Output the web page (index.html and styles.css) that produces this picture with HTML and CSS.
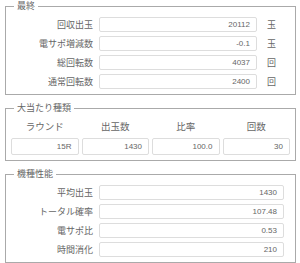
FILE: index.html
```html
<!DOCTYPE html>
<html lang="ja">
<head>
<meta charset="utf-8">
<link rel="stylesheet" href="styles.css">
</head>
<body>
<fieldset class="box">
  <legend>最終</legend>
  <div class="form3">
    <label>回収出玉</label><div class="inp">20112</div><span class="unit">玉</span>
    <label>電サポ増減数</label><div class="inp">-0.1</div><span class="unit">玉</span>
    <label>総回転数</label><div class="inp">4037</div><span class="unit">回</span>
    <label>通常回転数</label><div class="inp">2400</div><span class="unit">回</span>
  </div>
</fieldset>
<fieldset class="box">
  <legend>大当たり種類</legend>
  <div class="cols">
    <span class="head">ラウンド</span><span class="head">出玉数</span><span class="head">比率</span><span class="head">回数</span>
    <div class="inp">15R</div><div class="inp">1430</div><div class="inp">100.0</div><div class="inp">30</div>
  </div>
</fieldset>
<fieldset class="box">
  <legend>機種性能</legend>
  <div class="form2">
    <label>平均出玉</label><div class="inp">1430</div>
    <label>トータル確率</label><div class="inp">107.48</div>
    <label>電サポ比</label><div class="inp">0.53</div>
    <label>時間消化</label><div class="inp">210</div>
  </div>
</fieldset>
<div class="btnrow"><div class="btn"></div></div>
</body>
</html>
```
FILE: styles.css
```css
html, body {
  margin: 0;
  padding: 0;
  background: #fff;
}
body {
  padding: 0 4px 0 5px;
  font-family: "Noto Sans CJK JP", "Noto Sans", sans-serif;
  font-size: 9px;
  color: #666;
}
.box {
  margin: 0 0 7px 0;
  border: 1px solid #aaa;
  padding: 5px 5px 5px 5px;
  min-width: 0;
}
.box legend {
  padding: 0 3px;
  margin-left: 3px;
  line-height: 12px;
}
.form3 {
  display: grid;
  grid-template-columns: 82px 158px 1fr;
  column-gap: 6px;
  row-gap: 4px;
  align-items: center;
}
.form2 {
  display: grid;
  grid-template-columns: 82px 1fr;
  column-gap: 6px;
  row-gap: 4px;
  align-items: center;
  padding-right: 6px;
}
label {
  text-align: right;
}
.unit {
  padding-left: 4px;
}
.inp {
  height: 13px;
  border: 1px solid #ddd;
  border-radius: 2px;
  text-align: right;
  padding: 0 6px;
  line-height: 13px;
  font-family: "Liberation Sans", Arial, sans-serif;
  font-size: 8px;
  color: #666;
}
.cols {
  display: grid;
  grid-template-columns: repeat(4, 1fr);
  column-gap: 3px;
  row-gap: 5px;
}
.head {
  text-align: center;
  font-size: 9.5px;
  line-height: 14px;
}
.cols .inp {
  height: 15px;
  line-height: 15px;
}
.btnrow {
  display: flex;
  justify-content: center;
}
.btn {
  width: 150px;
  height: 10px;
  border-top: 1px solid #a9bfdc;
  border-left: 1px solid #a9bfdc;
  border-right: 1px solid #a9bfdc;
}
```
